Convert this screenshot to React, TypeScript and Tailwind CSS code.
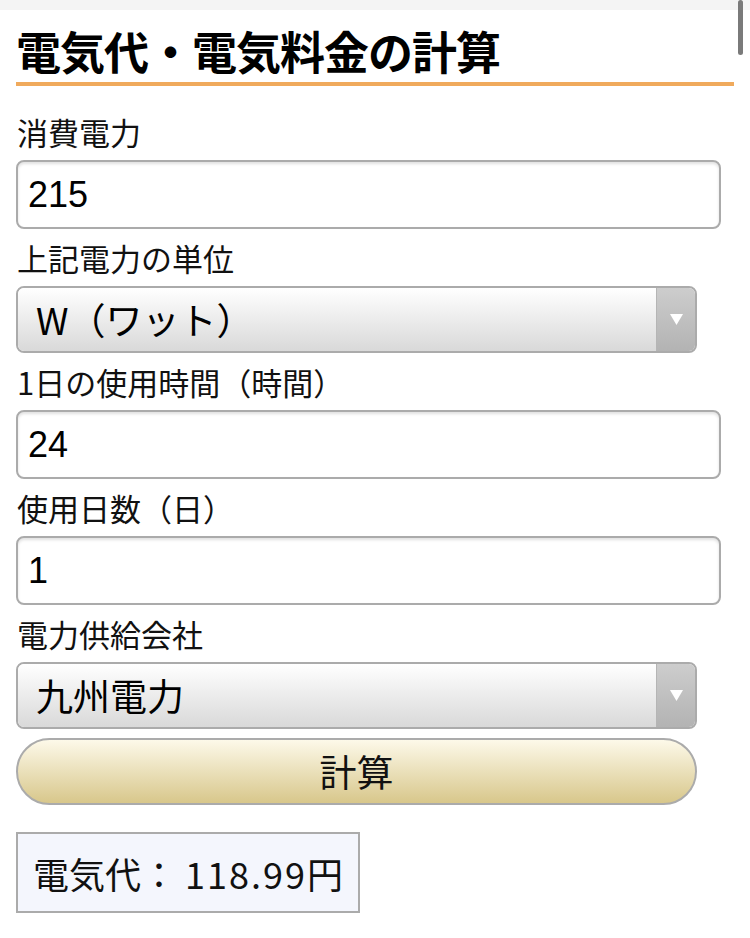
import React from 'react';

const jp = "font-['Noto_Sans_CJK_JP','Liberation_Sans',sans-serif]";

const Label: React.FC<{ text: string }> = ({ text }) => (
  <div className={`${jp} pt-[12px] pb-[11px] pl-[1px] text-[31px] leading-[34px] text-[#111]`}>{text}</div>
);

const TextBox: React.FC<{ value: string }> = ({ value }) => (
  <div className="w-[705px] h-[69px] rounded-[8px] border-2 border-[#ababab] bg-white shadow-[inset_0_2px_3px_rgba(0,0,0,0.12)] flex items-center pl-[10px]">
    <span className="font-['Liberation_Sans','Noto_Sans_CJK_JP',sans-serif] text-[36px] text-black leading-none">{value}</span>
  </div>
);

const SelectBox: React.FC<{ value: string }> = ({ value }) => (
  <div className="w-[681px] h-[67px] rounded-[8px] border-2 border-[#ababab] overflow-hidden flex">
    <div className={`${jp} flex-1 flex items-center pl-[18px] text-[37px] text-black bg-gradient-to-b from-[#ffffff] to-[#d9d9d9]`}>
      {value}
    </div>
    <div className="w-[39px] border-l border-[#b5b5b5] bg-gradient-to-b from-[#cdcdcd] to-[#b3b3b3] flex items-center justify-center">
      <svg width="13" height="11" viewBox="0 0 13 11">
        <path d="M0 0 H13 L6.5 11 Z" fill="#ffffff" />
      </svg>
    </div>
  </div>
);

export default function App() {
  return (
    <div className="relative w-[750px] min-h-[938px] bg-white">
      <div className="h-[10px] bg-[#f4f4f4]" />
      <div className="absolute right-[7px] top-0 w-[5px] h-[55px] rounded-full bg-[#7a7a7a]" />

      <div className="px-[16px]">
        <h1 className={`${jp} pt-[15px] pb-[5px] border-b-4 border-[#f0aa5c] text-[45px] leading-[52px] font-bold text-black tracking-[-1px]`}>
          電気代・電気料金の計算
        </h1>

        <div className="pt-[17px]">
          <Label text="消費電力" />
          <TextBox value="215" />
          <Label text="上記電力の単位" />
          <SelectBox value="W（ワット）" />
          <Label text="1日の使用時間（時間）" />
          <TextBox value="24" />
          <Label text="使用日数（日）" />
          <TextBox value="1" />
          <Label text="電力供給会社" />
          <SelectBox value="九州電力" />

          <div className="mt-[9px] w-[681px] h-[67px] rounded-full border-2 border-[#ababab] bg-gradient-to-b from-[#fdf9e9] to-[#d8c78b] flex items-center justify-center">
            <span className={`${jp} text-[37px] text-[#111] leading-none`}>計算</span>
          </div>

          <div className="mt-[27px] inline-flex items-center h-[81px] px-[15px] border-2 border-[#ababab] bg-[#f4f6fd]">
            <span className={`${jp} text-[36px] text-[#111] leading-none`}>
              電気代： <span className="tracking-[2px]">118.99</span>円
            </span>
          </div>
        </div>
      </div>
    </div>
  );
}
